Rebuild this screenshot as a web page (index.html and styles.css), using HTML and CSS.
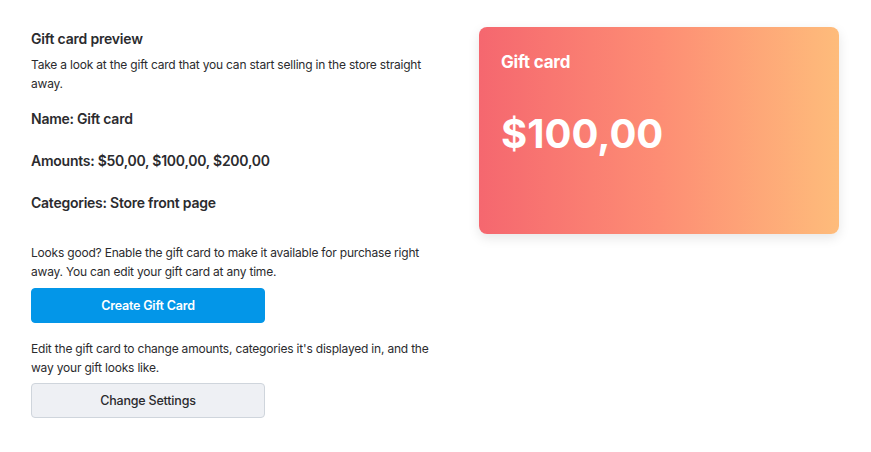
FILE: index.html
```html
<!DOCTYPE html>
<html>
<head>
<meta charset="utf-8">
<link rel="stylesheet" href="styles.css">
</head>
<body>
<div class="page">
  <div class="info">
    <h2 class="title">Gift card preview</h2>
    <p class="text">Take a look at the gift card that you can start selling in the store straight away.</p>
    <div class="facts">
      <div class="fact">Name: Gift card</div>
      <div class="fact">Amounts: $50,00, $100,00, $200,00</div>
      <div class="fact">Categories: Store front page</div>
    </div>
    <p class="text">Looks good? Enable the gift card to make it available for purchase right away. You can edit your gift card at any time.</p>
    <button class="btn btn-primary">Create Gift Card</button>
    <p class="text">Edit the gift card to change amounts, categories it's displayed in, and the way your gift looks like.</p>
    <button class="btn btn-secondary">Change Settings</button>
  </div>
  <div class="card">
    <div class="card-label">Gift card</div>
    <div class="card-amount">$100,00</div>
  </div>
</div>
</body>
</html>
```
FILE: styles.css
```css
html, body {
  margin: 0;
  padding: 0;
  background: #ffffff;
}
body {
  font-family: Inter, "Noto Sans", sans-serif;
  color: #2b2b2e;
}
.page {
  display: flex;
  align-items: flex-start;
  gap: 38px;
  padding: 27px 0 0 31px;
}
.info {
  width: 410px;
  display: flex;
  flex-direction: column;
  align-items: flex-start;
}
.title {
  margin: 2px 0 0;
  font-size: 14px;
  font-weight: 600;
  line-height: 20px;
  letter-spacing: -0.2px;
}
.text {
  margin: 6px 0 0;
  font-size: 12px;
  line-height: 19px;
  letter-spacing: -0.2px;
}
.facts {
  display: flex;
  flex-direction: column;
  gap: 22px;
  margin-top: 16px;
  margin-bottom: 24px;
}
.fact {
  font-size: 14px;
  font-weight: 600;
  line-height: 20px;
  letter-spacing: -0.25px;
}
.btn {
  width: 234px;
  height: 35px;
  margin-top: 7px;
  margin-bottom: 10px;
  border-radius: 4px;
  font-family: Inter, "Noto Sans", sans-serif;
  font-size: 12.5px;
  letter-spacing: -0.2px;
  cursor: pointer;
}
.btn-primary {
  background: #0396e8;
  color: #ffffff;
  border: 1px solid #0396e8;
  font-weight: 600;
}
.btn-secondary {
  margin-top: 6px;
  background: #eef0f4;
  color: #2b2b2e;
  border: 1px solid #cfd5dc;
  font-weight: 500;
}
.card {
  width: 360px;
  height: 207px;
  box-sizing: border-box;
  padding: 24px 22px;
  border-radius: 8px;
  background: linear-gradient(90deg, #f5676f 0%, #fd8d74 50%, #febc7b 100%);
  box-shadow: 0 4px 12px rgba(0, 0, 0, 0.10);
  color: #ffffff;
}
.card-label {
  font-size: 17px;
  font-weight: 700;
  line-height: 22px;
  letter-spacing: -0.2px;
}
.card-amount {
  margin-top: 38px;
  font-size: 40px;
  font-weight: 700;
  line-height: 46px;
  letter-spacing: 0;
}
```
